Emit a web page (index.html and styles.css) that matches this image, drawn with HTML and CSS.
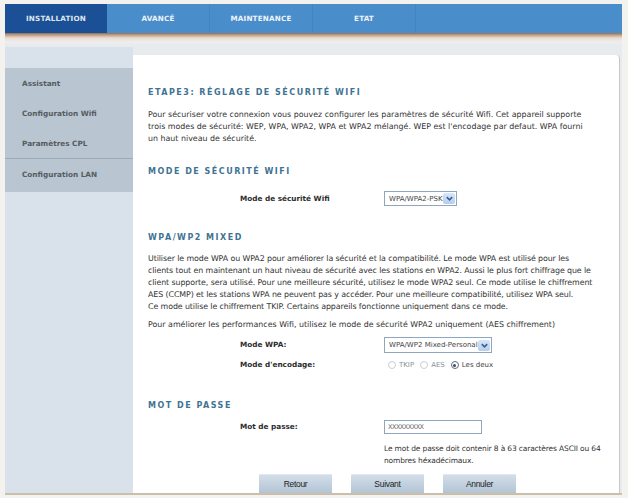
FILE: index.html
```html
<!DOCTYPE html>
<html lang="fr">
<head>
  <meta charset="UTF-8" />
  <title>Installation - Sécurité Wifi</title>
  <link rel="stylesheet" href="styles.css">
</head>
<body>

  <div class="page">
    <nav class="tabs">
      <a class="active" href="#">INSTALLATION</a>
      <a href="#">AVANCÉ</a>
      <a href="#">MAINTENANCE</a>
      <a href="#">ETAT</a>
      <span class="tab-fill"></span>
    </nav>
    <div class="tabs-shadow"></div>

    <div class="main">
      <aside class="side">
        <ul class="menu">
          <li><a href="#">Assistant</a></li>
          <li><a href="#">Configuration Wifi</a></li>
          <li><a href="#">Paramètres CPL</a></li>
          <li class="sep"><a href="#">Configuration LAN</a></li>
        </ul>
      </aside>

      <section class="content">
        <h2>ETAPE3: RÉGLAGE DE SÉCURITÉ WIFI</h2>
        <p class="intro">Pour sécuriser votre connexion vous pouvez configurer les paramètres de sécurité Wifi. Cet appareil supporte trois modes de sécurité: WEP, WPA, WPA2, WPA et WPA2 mélangé. WEP est l'encodage par defaut. WPA fourni un haut niveau de sécurité.</p>

        <h2 class="h-mode">MODE DE SÉCURITÉ WIFI</h2>
        <div class="row row-mode">
          <label>Mode de sécurité Wifi</label>
          <div class="select sel-psk"><span>WPA/WPA2-PSK</span><i class="arrow"><svg viewBox="0 0 10 10"><path d="M2 3.5 L5 6.5 L8 3.5" /></svg></i></div>
        </div>

        <h2 class="h-wpa">WPA/WP2 MIXED</h2>
        <p class="wpa-text">Utiliser le mode WPA ou WPA2 pour améliorer la sécurité et la compatibilité. Le mode WPA est utilisé pour les clients tout en maintenant un haut niveau de sécurité avec les stations en WPA2. Aussi le plus fort chiffrage que le client supporte, sera utilisé. Pour une meilleure sécurité, utilisez le mode WPA2 seul. Ce mode utilise le chiffrement AES (CCMP) et les stations WPA ne peuvent pas y accéder. Pour une meilleure compatibilité, utilisez WPA seul.<br>Ce mode utilise le chiffrement TKIP. Certains appareils fonctionne uniquement dans ce mode.</p>
        <p class="perf">Pour améliorer les performances Wifi, utilisez le mode de sécurité WPA2 uniquement (AES chiffrement)</p>

        <div class="row row-wpa">
          <label>Mode WPA:</label>
          <div class="select sel-mixed"><span>WPA/WP2 Mixed-Personal</span><i class="arrow"><svg viewBox="0 0 10 10"><path d="M2 3.5 L5 6.5 L8 3.5" /></svg></i></div>
        </div>
        <div class="row row-enc">
          <label>Mode d'encodage:</label>
          <div class="radios">
            <span class="radio"></span><span class="off">TKIP</span>
            <span class="radio"></span><span class="off">AES</span>
            <span class="radio checked"></span><span>Les deux</span>
          </div>
        </div>

        <h2 class="h-pass">MOT DE PASSE</h2>
        <div class="row row-pass">
          <label>Mot de passe:</label>
          <div class="input">XXXXXXXXX</div>
        </div>
        <p class="hint">Le mot de passe doit contenir 8 à 63 caractères ASCII ou 64<br>nombres héxadécimaux.</p>

        <div class="buttons">
          <button type="button">Retour</button>
          <button type="button">Suivant</button>
          <button type="button">Annuler</button>
        </div>
      </section>
    </div>
  </div>

</body>
</html>
```

FILE: styles.css
```css
* {
  box-sizing: border-box;
}

body {
  margin: 0;
  background-color: #f3f2ee;
  font-family: 'DejaVu Sans', sans-serif;
  font-size: 7.9px;
  color: #333;
}

.page {
  padding: 4px 6px 0 5px;
}

/* top tabs */
.tabs {
  display: flex;
  height: 29px;
  background-color: #4a8dcb;
}

.tabs a {
  width: 103px;
  display: flex;
  align-items: center;
  justify-content: center;
  color: #eef3f9;
  text-decoration: none;
  font-weight: bold;
  font-size: 7.2px;
  letter-spacing: 0.2px;
  border-right: 1px solid #4584c0;
}

.tabs a.active {
  width: 102px;
  background-color: #1b4f96;
  color: #dfe6ef;
  border-right: none;
}

.tab-fill {
  flex: 1;
}

.tabs-shadow {
  height: 14px;
  background: linear-gradient(#8a6f5c 0, #c0a088 2px, #ecdccf 5px, #eceef0 9px, #e6e9ed 14px);
}

/* side menu + content */
.main {
  display: flex;
  border-bottom: 2px solid #cbbfa9;
  background-color: #e8ebee;
}

.side {
  width: 128px;
  flex-shrink: 0;
  padding-top: 21px;
  background-color: #d9e1eb;
}

.menu {
  list-style: none;
  margin: 0;
  padding: 0 0 3px 0;
  background-color: #b9c5d0;
}

.menu li {
  height: 30px;
  display: flex;
  align-items: center;
  padding-left: 17px;
}

.menu li.sep {
  border-top: 1px solid #9dabb8;
  height: 31px;
}

.menu a {
  color: #555c63;
  text-decoration: none;
  font-weight: bold;
  font-size: 7.3px;
}

.content {
  flex: 1;
  min-width: 0;
  margin-top: 8px;
  margin-right: 2px;
  background-color: #fff;
  border-right: 1px solid #c4c9ce;
  border-top-right-radius: 4px;
  padding: 32px 24px 0 15px;
  line-height: 12px;
}

h2 {
  margin: 0;
  font-size: 8px;
  line-height: 12px;
  letter-spacing: 1.5px;
  color: #3f7393;
}

p {
  margin: 0;
}

.intro {
  margin-top: 10px;
}

.h-mode {
  margin-top: 21px;
}

.h-wpa {
  margin-top: 26px;
}

.wpa-text {
  margin-top: 9px;
  letter-spacing: -0.1px;
}

.perf {
  margin-top: 6px;
}

.h-pass {
  margin-top: 27px;
}

.row {
  display: flex;
  align-items: center;
  padding-left: 92px;
}

.row label {
  width: 144px;
  font-weight: bold;
  font-size: 7.3px;
  color: #2c2c2c;
}

.row-mode {
  margin-top: 13px;
  height: 15px;
}

.row-wpa {
  margin-top: 6px;
  height: 16px;
}

.row-enc {
  margin-top: 4px;
  height: 16px;
}

.row-pass {
  margin-top: 8px;
  height: 14px;
}

.select {
  display: flex;
  align-items: center;
  height: 100%;
  border: 1px solid #8ea6bf;
  background-color: #fff;
  padding-left: 4px;
  color: #444;
  font-size: 7px;
}

.select span {
  flex: 1;
}

.sel-psk {
  width: 73px;
}

.sel-mixed {
  width: 108px;
}

.arrow {
  width: 12px;
  height: 11px;
  margin-right: 1px;
  border-radius: 2px;
  background: linear-gradient(#d8e6f8, #b6cdea);
  display: flex;
  align-items: center;
  justify-content: center;
}

.arrow svg {
  width: 9px;
  height: 9px;
}

.arrow path {
  fill: none;
  stroke: #34619b;
  stroke-width: 1.8;
}

.radios {
  display: flex;
  align-items: center;
  padding-left: 4px;
  font-size: 7px;
  color: #444;
}

.radio {
  width: 8px;
  height: 8px;
  border-radius: 50%;
  border: 1px solid #c9cfd4;
  margin-right: 3px;
  display: flex;
  align-items: center;
  justify-content: center;
}

.radios .off {
  color: #8a8f94;
  margin-right: 6px;
}

.radio.checked {
  border-color: #5d6f80;
}

.radio.checked::after {
  content: "";
  width: 3px;
  height: 3px;
  border-radius: 50%;
  background-color: #3c4c5c;
}

.input {
  width: 98px;
  height: 100%;
  border: 1px solid #8ea6bf;
  padding-left: 3px;
  font-size: 6.5px;
  line-height: 12px;
  color: #666;
  letter-spacing: -0.5px;
}

.hint {
  margin-top: 9px;
  margin-left: 236px;
  margin-right: -20px;
  font-size: 7.5px;
  letter-spacing: -0.15px;
}

.buttons {
  display: flex;
  gap: 19px;
  padding-left: 111px;
  margin-top: 7px;
}

.buttons button {
  width: 73px;
  height: 19px;
  border: none;
  border-top: 1px solid #e0e8f0;
  background: linear-gradient(#d3dee9, #b2c4d4);
  font-family: 'Liberation Sans', Arial, sans-serif;
  font-size: 8.5px;
  color: #222;
  letter-spacing: -0.3px;
  padding: 0;
}
```
